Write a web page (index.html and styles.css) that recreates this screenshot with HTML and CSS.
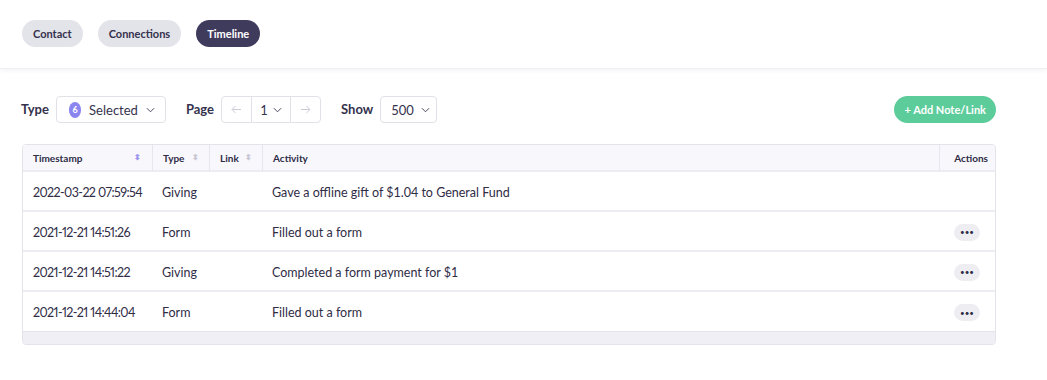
FILE: index.html
```html
<!DOCTYPE html>
<html>
<head>
  <link rel="stylesheet" href="styles.css">
</head>
<body>
  <div class="header">
    <button class="tab">Contact</button>
    <button class="tab">Connections</button>
    <button class="tab active">Timeline</button>
  </div>

  <div class="content">
    <div class="toolbar">
      <div class="group">
        <span class="label">Type</span>
        <div class="select">
          <span class="badge">6</span>
          <span>Selected</span>
          <svg class="chev" viewBox="0 0 10 6" width="9" height="6"><path d="M1 1l4 4 4-4" fill="none" stroke="#4a4760" stroke-width="1.1"/></svg>
        </div>
      </div>
      <div class="group">
        <span class="label">Page</span>
        <div class="pager">
          <span class="pg arrow"><svg viewBox="0 0 12 10" width="11" height="9"><path d="M11 5H1.5M5 1L1 5l4 4" fill="none" stroke="#c6c5d2" stroke-width="1"/></svg></span>
          <span class="pg num">1 <svg class="chev" viewBox="0 0 10 6" width="9" height="6"><path d="M1 1l4 4 4-4" fill="none" stroke="#4a4760" stroke-width="1.1"/></svg></span>
          <span class="pg arrow"><svg viewBox="0 0 12 10" width="11" height="9"><path d="M1 5h9.5M7 1l4 4-4 4" fill="none" stroke="#c6c5d2" stroke-width="1"/></svg></span>
        </div>
      </div>
      <div class="group">
        <span class="label">Show</span>
        <div class="select small">
          <span>500</span>
          <svg class="chev" viewBox="0 0 10 6" width="9" height="6"><path d="M1 1l4 4 4-4" fill="none" stroke="#4a4760" stroke-width="1.1"/></svg>
        </div>
      </div>
      <button class="add-btn">+ Add Note/Link</button>
    </div>

    <table class="timeline">
      <thead>
        <tr>
          <th class="c-time">Timestamp <span class="sort active-sort">&#x2B0D;</span></th>
          <th class="c-type">Type <span class="sort">&#x2B0D;</span></th>
          <th class="c-link">Link <span class="sort">&#x2B0D;</span></th>
          <th>Activity</th>
          <th class="c-act">Actions</th>
        </tr>
      </thead>
      <tbody>
        <tr>
          <td class="stamp">2022-03-22 07:59:54</td>
          <td>Giving</td>
          <td></td>
          <td>Gave a offline gift of $1.04 to General Fund</td>
          <td></td>
        </tr>
        <tr>
          <td class="stamp">2021-12-21 14:51:26</td>
          <td>Form</td>
          <td></td>
          <td>Filled out a form</td>
          <td class="c-act"><span class="more">&bull;&bull;&bull;</span></td>
        </tr>
        <tr>
          <td class="stamp">2021-12-21 14:51:22</td>
          <td>Giving</td>
          <td></td>
          <td>Completed a form payment for $1</td>
          <td class="c-act"><span class="more">&bull;&bull;&bull;</span></td>
        </tr>
        <tr>
          <td class="stamp">2021-12-21 14:44:04</td>
          <td>Form</td>
          <td></td>
          <td>Filled out a form</td>
          <td class="c-act"><span class="more">&bull;&bull;&bull;</span></td>
        </tr>
      </tbody>
      <tfoot>
        <tr><td colspan="5"></td></tr>
      </tfoot>
    </table>
  </div>
</body>
</html>
```

FILE: styles.css
```css
* {
  box-sizing: border-box;
  font-family: 'Lato', 'Noto Sans', sans-serif;
}

body {
  margin: 0;
  background: #fff;
  color: #2f2c46;
}

.header {
  height: 69px;
  padding: 20px 22px 0 22px;
  display: flex;
  gap: 15px;
  align-items: flex-start;
  border-bottom: 1px solid #efeff3;
  box-shadow: 0 2px 4px rgba(40, 40, 70, 0.05);
}

.tab {
  height: 27px;
  padding: 0 11px;
  border: none;
  border-radius: 14px;
  background: #e3e3ea;
  color: #35324d;
  font-size: 11px;
  font-weight: 700;
  cursor: pointer;
}

.tab.active {
  background: #3f3b5c;
  color: #fff;
}

.content {
  padding: 27px 51px 0 21px;
}

.toolbar {
  display: flex;
  align-items: center;
  gap: 20px;
  height: 27px;
}

.group {
  display: flex;
  align-items: center;
  gap: 7px;
}

.label {
  font-size: 13px;
  font-weight: 700;
  color: #35324d;
  margin-top: -2px;
}

.select {
  height: 27px;
  border: 1px solid #e1e1e8;
  border-radius: 4px;
  display: flex;
  align-items: center;
  gap: 8px;
  padding: 0 10px 0 12px;
  font-size: 13px;
  color: #35324d;
  width: 110px;
}

.select.small {
  width: 57px;
  padding: 0 8px 0 10px;
  gap: 7px;
}

.badge {
  width: 16px;
  height: 16px;
  border-radius: 50%;
  background: #8b85f0;
  color: #fff;
  font-size: 9px;
  font-weight: 700;
  display: flex;
  align-items: center;
  justify-content: center;
}

.chev {
  flex-shrink: 0;
}

.pager {
  height: 27px;
  border: 1px solid #e1e1e8;
  border-radius: 4px;
  display: flex;
}

.pg {
  display: flex;
  align-items: center;
  justify-content: center;
  font-size: 13px;
  color: #35324d;
}

.pg.arrow {
  width: 29px;
}

.pg.num {
  width: 40px;
  gap: 5px;
  border-left: 1px solid #e1e1e8;
  border-right: 1px solid #e1e1e8;
}

.add-btn {
  margin-left: auto;
  height: 27px;
  padding: 0 10px;
  border: none;
  border-radius: 14px;
  background: #5ccc9b;
  color: #fff;
  font-size: 11px;
  font-weight: 700;
  cursor: pointer;
}

.timeline {
  margin-top: 21px;
  margin-left: 1px;
  width: 974px;
  border-collapse: separate;
  border-spacing: 0;
  border: 1px solid #e3e3ea;
  border-radius: 4px;
  overflow: hidden;
  table-layout: fixed;
}

.timeline th {
  height: 27px;
  background: #f7f7fc;
  font-size: 10px;
  font-weight: 700;
  text-align: left;
  padding: 1px 10px 0 10px;
  color: #2f2c46;
  border-left: 1px solid #e6e6ee;
  border-bottom: 2px solid #ececf3;
}

.timeline th:first-child {
  border-left: none;
}

.timeline td {
  height: 40px;
  font-size: 12.5px;
  padding: 2px 10px 0 10px;
  white-space: nowrap;
  border-bottom: 2px solid #ececf3;
}

.timeline td.stamp {
  font-variant-numeric: proportional-nums;
  letter-spacing: -0.6px;
}

.timeline tbody tr:last-child td {
  border-bottom: 1px solid #e3e3ea;
}

.timeline tfoot td {
  height: 12px;
  background: #efeff5;
  border-bottom: none;
  padding: 0;
}

.c-time { width: 129px; }
.c-type { width: 57px; }
.c-link { width: 53px; }
.c-act { width: 56px; text-align: right; }

.timeline th.c-act {
  text-align: right;
  padding-right: 7px;
}

.timeline td.c-act {
  padding-right: 15px;
}

.sort {
  float: right;
  color: #c9c8d3;
  font-size: 8px;
}

.sort.active-sort {
  color: #9c96ee;
  margin-right: 1px;
}

.more {
  display: inline-flex;
  align-items: center;
  justify-content: center;
  width: 26px;
  height: 17px;
  border-radius: 9px;
  background: #eeeef2;
  font-size: 8px;
  color: #2f2c46;
}
```
